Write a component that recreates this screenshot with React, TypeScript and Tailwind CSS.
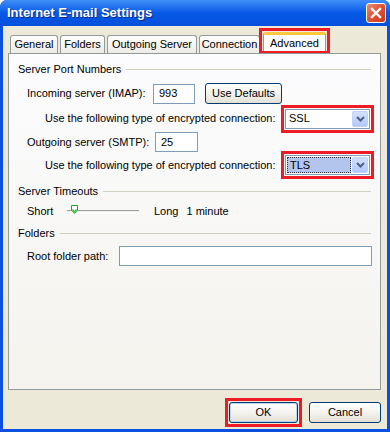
import React from 'react';

const GroupHeader: React.FC<{ title: string; className?: string }> = ({ title, className }) => (
    <div className={`flex items-center h-[14px] pr-[9px] ${className ?? ''}`}>
        <span className="whitespace-nowrap">{title}</span>
        <div className="flex-1 ml-[5px] h-px bg-[#D0D0BF]" />
    </div>
);

const TextBox: React.FC<{ value?: string; className?: string }> = ({ value, className }) => (
    <div className={`h-[20px] shrink-0 border border-[#7F9DB9] bg-white flex items-center px-[5px] ${className ?? ''}`}>
        {value}
    </div>
);

const Chevron: React.FC = () => (
    <svg width="9" height="6" viewBox="0 0 9 6">
        <path d="M1 1 L4.5 4.5 L8 1" fill="none" stroke="#4D6185" strokeWidth="2" />
    </svg>
);

const Select: React.FC<{ value: string; focused?: boolean }> = ({ value, focused }) => (
    <div className="w-[85px] h-[20px] border border-[#7F9DB9] bg-white flex items-stretch p-px">
        <div className={`flex-1 flex items-center pl-[2px] ${focused ? 'bg-[#B3C5EC] border border-dotted border-[#334]' : ''}`}>
            {value}
        </div>
        <div className="w-[16px] ml-px rounded-[2px] bg-gradient-to-b from-[#D4E1FC] to-[#B2C8F7] border border-[#C0D2F8] flex items-center justify-center">
            <Chevron />
        </div>
    </div>
);

const Highlight: React.FC<{ children: React.ReactNode; className?: string }> = ({ children, className }) => (
    <div className={`shrink-0 border-[3px] border-[#ED1C24] ${className ?? ''}`}>{children}</div>
);

const XPButton: React.FC<{ label: string; className?: string; isDefault?: boolean }> = ({ label, className, isDefault }) => (
    <div className={`h-[21px] shrink-0 rounded-[3px] border border-[#003C74] bg-gradient-to-b from-white via-[#F4F3EE] to-[#E3E1D6] flex items-center justify-center ${isDefault ? 'shadow-[inset_0_0_0_1px_#B9D1F5]' : ''} ${className ?? ''}`}>
        {label}
    </div>
);

export default function App() {
    const tabs = ['General', 'Folders', 'Outgoing Server', 'Connection'];
    const tabWidths = ['w-[48px]', 'w-[45px]', 'w-[90px]', 'w-[61px]'];

    return (
        <div className="w-[390px] h-[432px] flex flex-col bg-[#0A4FE0] text-[11px] text-black font-['Liberation_Sans',Arial,sans-serif] overflow-hidden rounded-t-[7px]">
            {/* title bar */}
            <div className="h-[26px] flex items-center pl-[7px] pr-[4px] bg-gradient-to-b from-[#3E8EF7] via-[#0658E6] to-[#0450DC]">
                <span className="flex-1 text-white font-bold text-[13px] [text-shadow:1px_1px_0_#0A2A8A]">Internet E-mail Settings</span>
                <div className="w-[20px] h-[20px] rounded-[3px] border border-white bg-gradient-to-br from-[#E98A6E] via-[#E0502E] to-[#C93A1B] flex items-center justify-center">
                    <svg width="12" height="12" viewBox="0 0 12 12">
                        <path d="M2 2 L10 10 M10 2 L2 10" stroke="white" strokeWidth="2.4" strokeLinecap="square" />
                    </svg>
                </div>
            </div>

            {/* body */}
            <div className="flex-1 ml-[3px] mr-[3px] mb-[3px] bg-[#ECE9D8] flex flex-col">
                {/* tabs */}
                <div className="h-[27px] flex items-end pl-[7px]">
                    {tabs.map((t, i) => (
                        <div
                            key={t}
                            className={`${tabWidths[i]} mr-[2px] h-[18px] border border-b-0 border-[#919B9C] rounded-t-[3px] bg-gradient-to-b from-white to-[#ECEBE6] flex items-center justify-center whitespace-nowrap`}
                        >
                            {t}
                        </div>
                    ))}
                    <Highlight className="ml-[-3px] mb-[-1px] h-[26px] px-px pt-px">
                        <div className="w-[63px] h-full border border-b-0 border-[#919B9C] border-t-[3px] border-t-[#FFC73C] rounded-t-[3px] bg-[#FCFCFE] flex items-center justify-center">
                            Advanced
                        </div>
                    </Highlight>
                </div>

                {/* tab panel */}
                <div className="ml-[5px] mr-[6px] h-[337px] border border-[#919B9C] bg-gradient-to-b from-[#FCFCFE] to-[#F4F3EE] flex flex-col pl-[9px]">
                    <GroupHeader title="Server Port Numbers" className="mt-[8px]" />

                    <div className="mt-[7px] h-[21px] flex items-center pl-[9px]">
                        <span className="w-[126px] shrink-0 whitespace-nowrap">Incoming server (IMAP):</span>
                        <TextBox value="993" className="w-[42px]" />
                        <XPButton label="Use Defaults" className="ml-[10px] w-[77px]" />
                    </div>

                    <div className="mt-[1px] h-[27px] flex items-center pl-[27px]">
                        <span className="w-[236px] shrink-0 whitespace-nowrap">Use the following type of encrypted connection:</span>
                        <Highlight className="p-px">
                            <Select value="SSL" />
                        </Highlight>
                    </div>

                    <div className="h-[20px] flex items-center pl-[9px]">
                        <span className="w-[128px] shrink-0 whitespace-nowrap">Outgoing server (SMTP):</span>
                        <TextBox value="25" className="w-[43px]" />
                    </div>

                    <div className="h-[26px] flex items-center pl-[27px]">
                        <span className="w-[236px] shrink-0 whitespace-nowrap">Use the following type of encrypted connection:</span>
                        <Highlight className="p-px">
                            <Select value="TLS" focused />
                        </Highlight>
                    </div>

                    <GroupHeader title="Server Timeouts" className="mt-[6px]" />

                    <div className="mt-[4px] h-[18px] flex items-center pl-[9px]">
                        <span className="w-[40px] shrink-0">Short</span>
                        <div className="relative w-[72px] h-[18px] flex items-center">
                            <div className="w-full h-[3px] border-t border-[#A0A0A0] border-b border-b-white bg-[#ECEBE6]" />
                            <svg className="absolute left-[4px] top-[3px]" width="7" height="9" viewBox="0 0 7 9">
                                <path d="M0.5 0.5 H6.5 V5 L3.5 8.5 L0.5 5 Z" fill="#FFFFFF" stroke="#21A121" />
                                <path d="M1.5 4.5 L3.5 6.8 L5.5 4.5" fill="none" stroke="#1FBF2F" strokeWidth="1.2" />
                            </svg>
                        </div>
                        <span className="ml-[15px]">Long</span>
                        <span className="ml-[8px]">1 minute</span>
                    </div>

                    <GroupHeader title="Folders" className="mt-[6px]" />

                    <div className="mt-[6px] h-[20px] flex items-center pl-[9px]">
                        <span className="w-[92px] shrink-0 whitespace-nowrap">Root folder path:</span>
                        <TextBox className="w-[253px]" />
                    </div>
                </div>

                {/* buttons */}
                <div className="mt-[8px] flex items-center justify-end mr-[6px]">
                    <Highlight className="p-px">
                        <XPButton label="OK" className="w-[69px]" isDefault />
                    </Highlight>
                    <XPButton label="Cancel" className="ml-[7px] w-[72px]" />
                </div>
            </div>
        </div>
    );
}
